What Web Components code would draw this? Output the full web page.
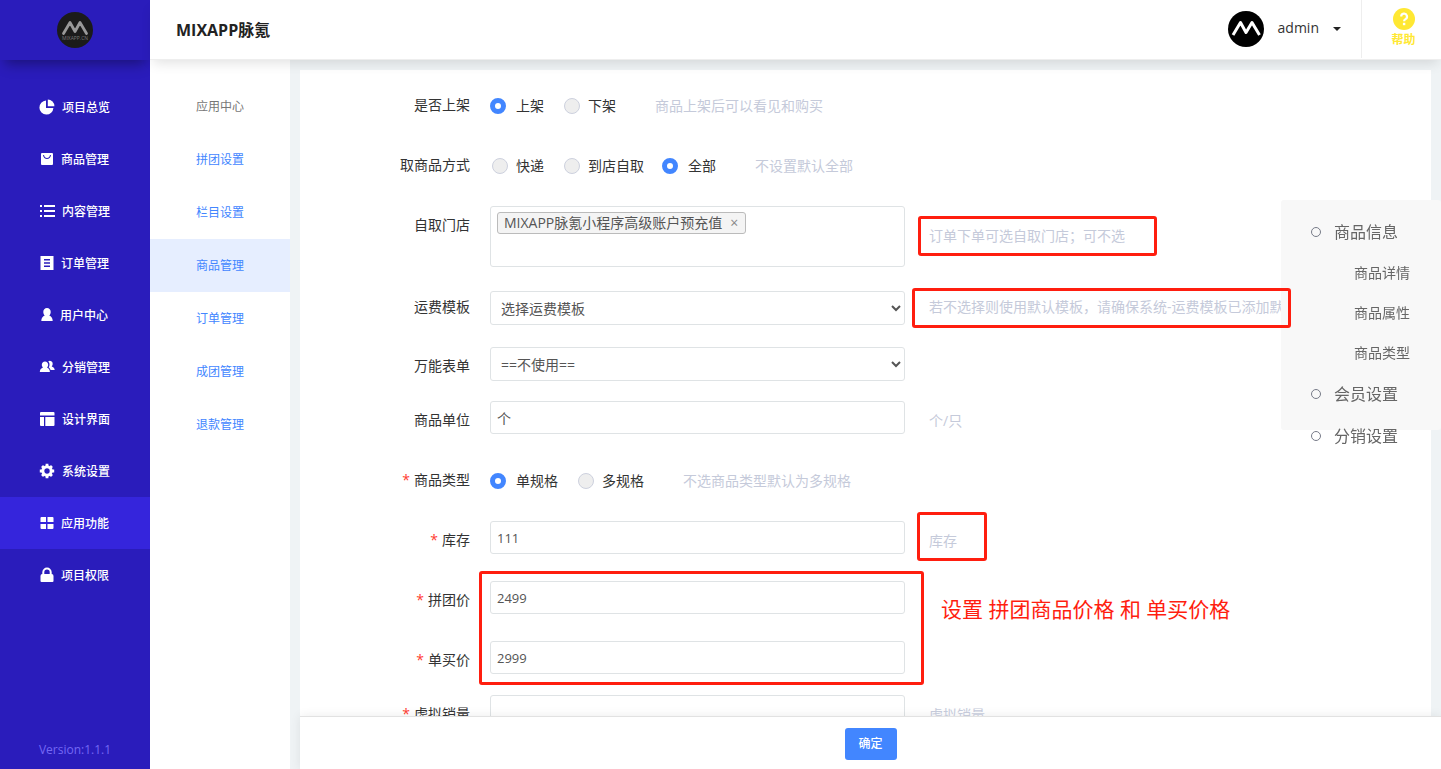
<!DOCTYPE html>
<html lang="zh-CN">
<head>
<meta charset="utf-8">
<meta name="viewport" content="width=device-width, initial-scale=1">
<title>MIXAPP脉氪</title>
<style>
  html, body { margin: 0; height: 100%; }
  body {
    font-family: "Open Sans", "Noto Sans CJK SC", sans-serif;
    font-size: 14px;
    line-height: 20px;
    color: #333;
    background: #eff3f5;
    overflow: hidden;
  }
</style>
</head>
<body>
<app-shell>
  <side-bar slot="side"></side-bar>
  <top-bar slot="top"></top-bar>
  <sub-menu slot="sub"></sub-menu>

  <form-panel slot="main">
    <radio-field label="是否上架" name="sale" options="上架,下架" checked="上架" note="商品上架后可以看见和购买"></radio-field>
    <radio-field label="取商品方式" name="pickup" options="快递,到店自取,全部" checked="全部" note="不设置默认全部"></radio-field>
    <tag-field label="自取门店" tag="MIXAPP脉氪小程序高级账户预充值">
      <hint-text slot="hint" mark="store">订单下单可选自取门店；可不选</hint-text>
    </tag-field>
    <select-field label="运费模板" option="选择运费模板" lead>
      <hint-text slot="hint" mark="freight">若不选择则使用默认模板，请确保系统-运费模板已添加默</hint-text>
    </select-field>
    <select-field label="万能表单" option="==不使用=="></select-field>
    <text-field label="商品单位" value="个"><hint-text slot="hint">个/只</hint-text></text-field>
    <radio-field required label="商品类型" name="kind" options="单规格,多规格" checked="单规格" note="不选商品类型默认为多规格"></radio-field>
    <text-field required label="库存" value="111"><hint-text slot="hint" mark="stock">库存</hint-text></text-field>
    <price-group>
      <text-field required label="拼团价" value="2499"></text-field>
      <text-field required label="单买价" value="2999"></text-field>
      <span slot="note">设置 拼团商品价格 和 单买价格</span>
    </price-group>
    <text-field required label="虚拟销量" value=""><hint-text slot="hint">虚拟销量</hint-text></text-field>
  </form-panel>

  <action-bar slot="actions">确定</action-bar>
  <anchor-nav slot="float"></anchor-nav>
</app-shell>

<script>
const define = (name, render) => customElements.define(name, class extends HTMLElement {
  connectedCallback() {
    if (this.shadowRoot) return;
    this.attachShadow({ mode: 'open' }).innerHTML = render(this);
  }
});

const ICONS = {
  pie: [16, '<path d="M7 1.6V9h7.4A7 7 0 1 1 7 1.6z"/><path d="M8.800 0.600a6.600 6.600 0 0 1 6.600 6.600H8.800z"/>'],
  bag: [14, '<path fill-rule="evenodd" d="M2 2h10a1 1 0 0 1 1 1v10a1 1 0 0 1-1 1H2a1 1 0 0 1-1-1V3a1 1 0 0 1 1-1zm1 2c.3 2.600 2 4 4 4s3.700-1.400 4-4h-1c-.3 1.900-1.500 3-3 3s-2.700-1.100-3-3z"/>'],
  list: [16, '<path d="M1 2h2v2H1zM5 2h11v2H5zM1 7h2v2H1zM5 7h11v2H5zM1 12h2v2H1zM5 12h11v2H5z"/>'],
  order: [14, '<path fill-rule="evenodd" d="M.5 1h13v14H.5zM4 4v1.500h6V4zm0 3.300v1.500h6V7.300zm0 3.300v1.500h6v-1.500z"/>'],
  user: [12, '<path d="M6 1a3.700 3.700 0 0 1 3.700 4c0 1.600-.6 2.800-1.500 3.500C10.300 9.500 11.700 11 11.700 14H.3c0-3 1.400-4.500 3.500-5.500C2.900 7.800 2.300 6.600 2.300 5A3.700 3.700 0 0 1 6 1z"/>'],
  users: [16, '<path d="M6 2.500c1.900 0 3.200 1.400 3.200 3.200 0 1.200-.5 2.100-1.200 2.800 1.700.7 2.800 2 2.900 4.500H.8C.9 10.500 2.200 9.200 4 8.500 3.300 7.800 2.800 6.900 2.800 5.700 2.800 3.900 4.100 2.500 6 2.500z"/><path d="M9.200 2.200A2.900 2.900 0 0 1 13.700 5c0 1-.4 1.800-1 2.400 1.700.6 2.900 1.600 3 3.600h-4.100c-.4-1.200-1-2-1.900-2.700.6-.8.9-1.700.8-2.900 0-1.300-.5-2.400-1.300-3.200z"/>'],
  layout: [16, '<path d="M2 1h12.500a1 1 0 0 1 1 1v2.500H1V2a1 1 0 0 1 1-1zM1 6h4v9H2a1 1 0 0 1-1-1zM6.300 6h9.200v8a1 1 0 0 1-1 1H6.300z"/>'],
  gear: [16, '<circle cx="8" cy="8" r="4.200" fill="none" stroke="#fff" stroke-width="3"/><path d="M6.600.8h2.800v3H6.600zM6.600 12.200h2.800v3H6.600zM.8 6.600h3v2.800h-3zM12.200 6.600h3v2.800h-3z"/><path transform="rotate(45 8 8)" d="M6.600 1h2.800v3H6.600zM6.600 12h2.800v3H6.600zM1 6.600h3v2.800H1zM12 6.600h3v2.800h-3z"/>'],
  grid: [14, '<path d="M1.500 2H6v5H.5V3a1 1 0 0 1 1-1zM7.500 2h5a1 1 0 0 1 1 1v4h-6zM.5 9H6v5H1.500a1 1 0 0 1-1-1zM7.500 9h6v4a1 1 0 0 1-1 1h-5z"/>'],
  lock: [14, '<path fill-rule="evenodd" d="M2.300 7V5.300a4.700 4.700 0 0 1 9.400 0V7a2 2 0 0 1 1.800 2v5a1 1 0 0 1-1 1h-11a1 1 0 0 1-1-1V9a2 2 0 0 1 1.800-2zM4.300 7h5.400V5.300a2.700 2.700 0 0 0-5.400 0z"/>']
};
const icon = name => `<svg aria-hidden="true" width="${ICONS[name][0]}" height="16" viewBox="0 0 ${ICONS[name][0]} 16" fill="#fff">${ICONS[name][1]}</svg>`;

/* Page frame */
define('app-shell', () => `
  <style>
    :host { display: grid; height: 100vh; grid-template: 60px minmax(0, 1fr) / 150px 140px minmax(0, 1fr); }
    .side { grid-area: 1 / 1 / 3 / 2; display: grid; }
    .top { grid-area: 1 / 2 / 2 / 4; display: grid; z-index: 5; }
    .sub { grid-area: 2 / 2; display: grid; }
    main { grid-area: 2 / 3; display: flex; flex-direction: column; min-height: 0; padding-left: 10px; }
    .scroll { flex: 1; min-height: 0; overflow: hidden; padding: 10px 10px 0 0; }
  </style>
  <div class="side"><slot name="side"></slot></div>
  <div class="top"><slot name="top"></slot></div>
  <div class="sub"><slot name="sub"></slot></div>
  <main><div class="scroll"><slot name="main"></slot></div><slot name="actions"></slot></main>
  <slot name="float"></slot>`);

/* Primary navigation */
define('side-bar', () => {
  const items = [['pie', '项目总览'], ['bag', '商品管理'], ['list', '内容管理'], ['order', '订单管理'], ['user', '用户中心'],
    ['users', '分销管理'], ['layout', '设计界面'], ['gear', '系统设置'], ['grid', '应用功能', 1], ['lock', '项目权限']];
  return `
  <style>
    :host { display: flex; flex-direction: column; background: #2a1cbb; }
    .logo { height: 60px; flex: none; display: grid; place-items: center; box-shadow: 0 9px 12px -5px rgba(0,0,0,.35); }
    nav { display: flex; flex-direction: column; margin-top: 21px; }
    a { height: 52px; display: flex; align-items: center; justify-content: center; gap: 7px; font-size: 12px; font-weight: 500; color: #fff; text-decoration: none; }
    a span { padding: 2px 1px 0 0; }
    a.on { background: #3525dc; }
    footer { margin-top: auto; height: 39px; line-height: 40px; text-align: center; font-size: 12px; color: #7468f4; }
  </style>
  <div class="logo">
    <svg role="img" aria-label="MIXAPP" width="36" height="36" viewBox="0 0 36 36"><circle cx="18" cy="18" r="18" fill="#1b1b1b"/>
      <path d="M6.500 21.500L13 10.500l5 9 5-9 6.500 11" fill="none" stroke="#999" stroke-width="2.800" stroke-linejoin="round" stroke-linecap="round"/>
      <text x="18" y="28" text-anchor="middle" font-size="5" fill="#777">MIXAPP.CN</text></svg>
  </div>
  <nav>${items.map(([i, t, on]) => `<a href="#"${on ? ' class="on" aria-current="page"' : ''}>${icon(i)}<span>${t}</span></a>`).join('')}</nav>
  <footer>Version:1.1.1</footer>`;
});

/* Header with account and help */
define('top-bar', () => `
  <style>
    :host { display: flex; align-items: center; box-sizing: border-box; padding-left: 26px; background: #fff; border-bottom: 1px solid #eee; box-shadow: 0 6px 12px -3px rgba(0,0,0,.12); }
    h1 { margin: 0 auto 0 0; font-size: 16px; line-height: 24px; font-weight: 700; color: #222; }
    button { display: flex; align-items: center; border: 0; padding: 0 0 2px; background: none; font: inherit; color: #333; }
    .name { margin: 0 14px; padding-bottom: 2px; }
    .caret { border: 4px solid transparent; border-top-color: #222; border-bottom: 0; }
    .help { box-sizing: border-box; width: 80px; height: 58px; margin-left: 20px; padding: 8px 0 0 4px; align-self: start; border-left: 1px solid #eee;
      display: flex; flex-direction: column; align-items: center; font-size: 12px; line-height: 20px; font-weight: 700; color: #ffe833; text-decoration: none; }
  </style>
  <h1>MIXAPP脉氪</h1>
  <button type="button">
    <svg aria-hidden="true" width="36" height="36" viewBox="0 0 36 36"><circle cx="18" cy="18" r="18"/>
      <path d="M5 24l7.500-12.500 5.500 10 6-10L31.500 24" fill="none" stroke="#fff" stroke-width="3" stroke-linejoin="round"/></svg>
    <span class="name">admin</span><span class="caret"></span>
  </button>
  <a class="help" href="#">
    <svg aria-hidden="true" width="22" height="22" viewBox="0 0 22 22"><circle cx="11" cy="11" r="11" fill="#ffe833"/>
      <path d="M8.200 8.600a2.900 2.900 0 1 1 4.300 2.500c-1 .6-1.400 1-1.400 2.200" fill="none" stroke="#fff" stroke-width="2.200"/><rect x="9.900" y="14.800" width="2.400" height="2.400" fill="#fff"/></svg>
    <span>帮助</span>
  </a>`);

/* Secondary navigation */
define('sub-menu', () => `
  <style>
    :host { display: flex; flex-direction: column; padding-top: 20px; background: #fff; font-size: 12px; text-align: center; }
    span, a { height: 53px; line-height: 53px; color: #4286ff; text-decoration: none; }
    span { color: #777; }
    .on { background: #e6eeff; }
  </style>
  <span>应用中心</span>${['拼团设置', '栏目设置', '商品管理', '订单管理', '成团管理', '退款管理']
    .map(t => `<a href="#"${t === '商品管理' ? ' class="on"' : ''}>${t}</a>`).join('')}`);

define('form-panel', () => `
  <style>
    :host { display: flex; flex-direction: column; gap: 20px; min-height: 100%; box-sizing: border-box; padding-top: 16px; background: #fff; }
  </style><slot></slot>`);

/* Form rows */
const rowStyle = `
  :host { display: flex; min-height: 40px; }
  .label { flex: none; width: 170px; margin-right: 20px; padding-top: 9px; text-align: right; }
  :host([required]) .label::before { content: "*"; margin-right: 4px; color: #ff3b30; }
  .control { box-sizing: border-box; flex: 0 1 415px; min-width: 0; border: 1px solid #dfe3e5; border-radius: 3px; background: #fff; font: inherit; color: #555; outline: 0; }
  ::slotted([slot=hint]) { margin: 10px 0 0 24px; }`;
const caption = el => `<label class="label" for="c">${el.getAttribute('label')}</label>`;

define('text-field', el => `
  <style>${rowStyle}
    input.control { height: 33px; padding: 0 6px; }
    :host([required]) input { font-size: 13px; }
  </style>${caption(el)}<input class="control" id="c" type="text" value="${el.getAttribute('value')}"><slot name="hint"></slot>`);

define('select-field', el => `
  <style>${rowStyle}
    :host { min-height: 34px; }
    :host([lead]) { padding-bottom: 2px; }
    :host([lead]) .label, :host([lead]) ::slotted([slot=hint]) { padding-top: 0; margin-top: 6px; }
    select.control { height: 34px; padding: 0 0 0 6px; }
  </style>${caption(el)}<select class="control" id="c"><option>${el.getAttribute('option')}</option></select><slot name="hint"></slot>`);

define('radio-field', el => {
  const name = el.getAttribute('name'), on = el.getAttribute('checked');
  return `
  <style>${rowStyle}
    .set { display: flex; align-items: center; height: 40px; }
    .set label { display: flex; align-items: center; margin-right: 18px; }
    input { appearance: none; box-sizing: border-box; width: 16px; height: 16px; margin: 0 8px 0 2px; border: 1px solid #cdd1de; border-radius: 50%; background: #eee; }
    input:checked { margin: 0 10px 0 0; border: 5px solid #4286ff; background: #fff; }
    .note { margin-left: 21px; color: #c5cada; }
  </style>
  <span class="label" id="cap">${el.getAttribute('label')}</span>
  <div class="set" role="radiogroup" aria-labelledby="cap">
    ${el.getAttribute('options').split(',').map(o => `<label><input type="radio" name="${name}"${o === on ? ' checked' : ''}>${o}</label>`).join('')}
    <span class="note">${el.getAttribute('note')}</span>
  </div>`;
});

define('tag-field', el => `
  <style>${rowStyle}
    :host { min-height: 65px; }
    div.control { height: 61px; padding: 5px 6px; display: flex; align-items: flex-start; }
    .tag { display: flex; align-items: center; box-sizing: border-box; height: 22px; padding: 0 7px 0 6px; border: 1px solid #bbb; border-radius: 3px; background: #f4f4f4; }
    button { border: 0; margin-left: 8px; padding: 0; background: none; font: inherit; color: #888; }
    input { flex: 1; min-width: 0; border: 0; padding: 0; outline: 0; background: none; font: inherit; }
    ::slotted([slot=hint]) { margin-top: 20px; }
  </style>${caption(el)}<div class="control"><span class="tag">${el.getAttribute('tag')}<button type="button" aria-label="移除">×</button></span><input id="c" type="text"></div><slot name="hint"></slot>`);

/* Grey help text, optionally framed by a red annotation */
define('hint-text', el => `
  <style>
    :host { position: relative; height: 20px; white-space: nowrap; color: #c5cada; }
    .mark { position: absolute; z-index: 3; box-sizing: border-box; border: 3px solid #ff1e0f; border-radius: 3px; pointer-events: none; }
    .store { inset: -10px auto auto -11px; width: 239px; height: 40px; }
    .freight { inset: -9px auto auto -17px; width: 379px; height: 40px; }
    .stock { inset: -19px auto auto -12px; width: 70px; height: 49px; }
  </style><slot></slot>${el.hasAttribute('mark') ? `<div class="mark ${el.getAttribute('mark')}"></div>` : ''}`);

define('price-group', () => `
  <style>
    :host { position: relative; display: flex; flex-direction: column; gap: 20px; }
    ::slotted(text-field:nth-child(2)) { min-height: 34px; }
    .mark { position: absolute; z-index: 3; left: 179px; top: -10px; box-sizing: border-box; width: 445px; height: 114px; border: 3px solid #ff1e0f; border-radius: 3px; pointer-events: none; }
    ::slotted([slot=note]) { position: absolute; left: 641px; top: 13px; font-size: 21px; line-height: 30px; color: #ff1e0f; white-space: nowrap; }
  </style><slot></slot><div class="mark"></div><slot name="note"></slot>`);

define('action-bar', () => `
  <style>
    :host { display: flex; flex: none; box-sizing: border-box; height: 53px; align-items: flex-start; justify-content: center; padding-top: 11px; background: #fff; border-top: 1px solid #e2e2e2; box-shadow: 0 0 10px rgba(0,0,0,.08); }
    button { height: 32px; width: 52px; padding: 0; border: 0; border-radius: 3px; background: #4286ff; color: #fff; font: 500 12px/32px "Open Sans", "Noto Sans CJK SC", sans-serif; }
  </style><button type="submit"><slot></slot></button>`);

/* Floating section index */
define('anchor-nav', () => `
  <style>
    :host { position: fixed; z-index: 2; right: 0; top: 200px; box-sizing: border-box; width: 160px; height: 230px; padding: 11px 0 0 30px; border-radius: 3px; background: #f8f8f8; }
    a { display: flex; align-items: center; color: #666; text-decoration: none; }
    .main { height: 42px; gap: 13px; font-size: 16px; }
    .main::before { content: ""; box-sizing: border-box; width: 10px; height: 10px; border: 1px solid #777b88; border-radius: 50%; }
    .child { height: 40px; padding-left: 43px; }
  </style>
  <a class="main" href="#">商品信息</a><a class="child" href="#">商品详情</a><a class="child" href="#">商品属性</a><a class="child" href="#">商品类型</a>
  <a class="main" href="#">会员设置</a><a class="main" href="#">分销设置</a>`);
</script>
</body>
</html>
